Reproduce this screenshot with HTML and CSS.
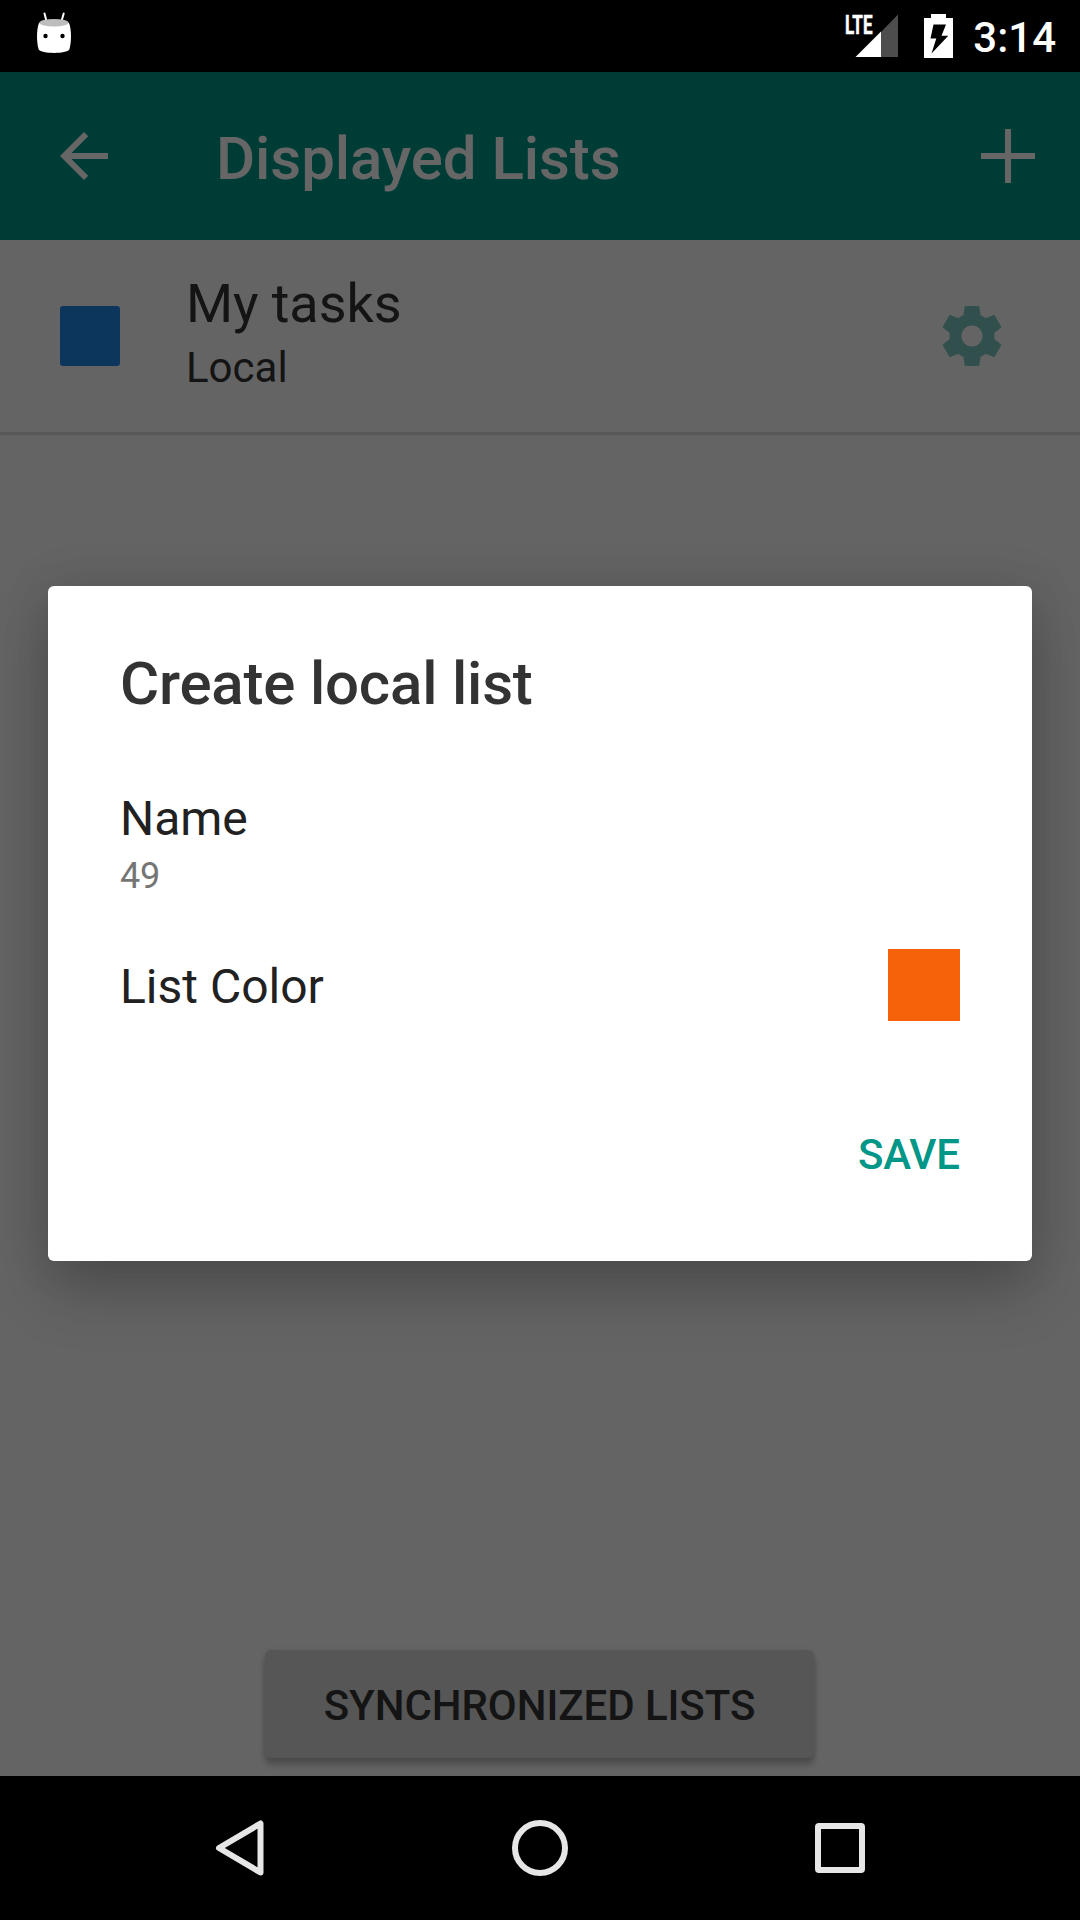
FILE: index.html
```html
<!DOCTYPE html>
<html lang="en">
<head>
<meta charset="utf-8">
<title>Displayed Lists</title>
<link rel="stylesheet" href="styles.css">
</head>
<body>
<div class="screen">
  <header class="status-bar">
    <svg class="status-robot" viewBox="0 0 40 48" aria-hidden="true">
      <path d="M10.5 3.5L12.7 12M29.7 3.5L27.3 12" stroke="#fff" stroke-width="2" stroke-linecap="round"/>
      <path d="M5 13C8 9.500 32 9.500 35 13C37.500 19 37.700 32 35.300 39.500C33 44 7 44 4.700 39.500C2.300 32 2.500 19 5 13Z" fill="#fff"/>
      <ellipse cx="20" cy="12.800" rx="14.500" ry="3.800" fill="#bdbdbd"/>
      <circle cx="11.500" cy="26" r="2.200"/><circle cx="28.500" cy="26" r="2.200"/>
    </svg>
    <svg class="status-signal" viewBox="0 0 56 48" aria-hidden="true">
      <path d="M38 22L55 4.500V47H38Z" fill="#4d4d4d"/>
      <path d="M12.500 47L38 21.500V47Z" fill="#fff"/>
      <text class="network" x="2" y="23.500" textLength="27.500" lengthAdjust="spacingAndGlyphs">LTE</text>
    </svg>
    <svg class="status-battery" viewBox="0 0 29 44" aria-hidden="true">
      <path fill="#fff" fill-rule="evenodd" d="M7 0H22V4H29V44H0V4H7ZM9.500 10.500L6.500 24.500H12.300L7.500 39.500L24.300 21.700H17.500L22 10.500Z"/>
    </svg>
    <span class="clock">3:14</span>
  </header>

  <main class="app">
    <div class="app-bar">
      <svg class="icon" viewBox="0 0 24 24" aria-label="Back"><path d="M20 11H7.830l5.590-5.590L12 4l-8 8 8 8 1.410-1.410L7.830 13H20v-2z"/></svg>
      <h1 class="app-title">Displayed Lists</h1>
      <svg class="icon" viewBox="0 0 24 24" aria-label="Add"><path d="M11 3h2v8h8v2h-8v8h-2v-8H3v-2h8z"/></svg>
    </div>
    <div class="list-row">
      <span class="list-swatch"></span>
      <div class="list-text">
        <div class="list-name">My tasks</div>
        <div class="list-account">Local</div>
      </div>
      <svg class="icon gear" viewBox="0 0 24 24" aria-label="Settings"><path d="M19.430 12.980c.04-.32.070-.64.070-.98s-.03-.66-.07-.98l2.110-1.650c.19-.15.240-.42.120-.64l-2-3.460c-.12-.22-.39-.3-.61-.22l-2.490 1c-.52-.4-1.080-.73-1.690-.98l-.38-2.650C14.460 2.180 14.250 2 14 2h-4c-.25 0-.46.180-.49.420l-.38 2.650c-.61.250-1.170.59-1.690.98l-2.490-1c-.23-.09-.49 0-.61.220l-2 3.460c-.13.220-.07.490.12.640l2.110 1.650c-.04.320-.07.650-.07.980s.03.660.070.980l-2.110 1.650c-.19.150-.24.420-.12.640l2 3.460c.12.220.39.300.61.220l2.490-1c.52.400 1.080.730 1.690.980l.38 2.650c.03.240.24.420.49.420h4c.25 0 .46-.18.490-.42l.38-2.650c.61-.25 1.170-.59 1.690-.98l2.490 1c.23.090.49 0 .61-.22l2-3.460c.12-.22.070-.49-.12-.64l-2.110-1.650zM12 15.500c-1.930 0-3.500-1.570-3.500-3.500s1.570-3.500 3.500-3.500 3.500 1.570 3.500 3.500-1.570 3.500-3.500 3.500z"/></svg>
    </div>
    <div class="app-footer">
      <button class="sync-button">SYNCHRONIZED LISTS</button>
    </div>

    <div class="scrim">
      <section class="dialog" role="dialog">
        <h2 class="dialog-title">Create local list</h2>
        <div class="field-name">Name</div>
        <div class="field-value">49</div>
        <div class="color-row">
          <span class="field-name">List Color</span>
          <span class="color-swatch"></span>
        </div>
        <button class="save">SAVE</button>
      </section>
    </div>
  </main>

  <nav class="nav-bar">
    <svg class="nav-icon" viewBox="0 0 72 72" aria-label="Back"><path d="M56.500 11.500V60.500L15 36Z"/></svg>
    <svg class="nav-icon" viewBox="0 0 72 72" aria-label="Home"><circle cx="36" cy="36" r="25"/></svg>
    <svg class="nav-icon" viewBox="0 0 72 72" aria-label="Recents"><rect x="14" y="14" width="44" height="44" rx="1"/></svg>
  </nav>
</div>
</body>
</html>
```
FILE: styles.css
```css
* {
  box-sizing: border-box;
  margin: 0;
}

body {
  font-family: Roboto, "Liberation Sans", sans-serif;
}

button {
  border: 0;
  padding: 0;
  font: inherit;
}

.screen {
  width: 1080px;
  height: 1920px;
  display: flex;
  flex-direction: column;
  overflow: hidden;
  background: #000;
}

/* Status bar */
.status-bar {
  height: 72px;
  display: flex;
  align-items: flex-start;
  padding: 10px 24px 0 34px;
}

.status-robot {
  width: 40px;
  height: 48px;
}

.status-signal {
  width: 56px;
  height: 48px;
  margin-left: auto;
}

.network {
  font: 700 26px Roboto, sans-serif;
  fill: #fff;
  stroke: #fff;
  stroke-width: 0.5px;
}

.status-battery {
  width: 29px;
  height: 44px;
  margin: 4px 20.5px 0 24.5px;
}

.clock {
  color: #fff;
  font-size: 42px;
  font-weight: 500;
  line-height: 56px;
}

/* App */
.app {
  position: relative;
  height: 1704px;
  display: flex;
  flex-direction: column;
  background: #fafafa;
}

.app-bar {
  height: 168px;
  display: flex;
  align-items: center;
  padding: 0 36px 0 48px;
  background: #009688;
}

.icon {
  width: 72px;
  height: 72px;
  fill: #fff;
}

.app-title {
  flex: 1;
  margin-left: 96px;
  padding-top: 6px;
  color: #fff;
  font-size: 60px;
  font-weight: 500;
  line-height: 70px;
  letter-spacing: -0.07px;
}

.list-row {
  height: 195px;
  display: flex;
  align-items: center;
  padding: 0 72px 0 60px;
  border-bottom: 3px solid #dcdcdc;
}

.list-swatch {
  width: 60px;
  height: 60px;
  border-radius: 3px;
  background: #1e88e5;
}

.list-text {
  flex: 1;
  margin-left: 66px;
  color: #333;
}

.list-name {
  font-size: 54px;
  line-height: 64px;
  letter-spacing: -0.1px;
}

.list-account {
  font-size: 42px;
  line-height: 64px;
}

.gear {
  fill: #009688;
  opacity: 0.5;
}

.app-footer {
  flex: 1;
  display: flex;
  justify-content: center;
  align-items: flex-end;
  padding: 0 1px 18px 0;
}

.sync-button {
  width: 549px;
  height: 108px;
  padding-top: 2px;
  border-radius: 6px;
  background: #d6d6d6;
  color: #333;
  font-size: 42px;
  font-weight: 500;
  letter-spacing: -0.07px;
  box-shadow: 0 7px 6px rgba(0, 0, 0, 0.22), 0 1px 6px rgba(0, 0, 0, 0.12);
}

/* Dialog */
.scrim {
  position: absolute;
  inset: 0;
  padding: 514px 48px 0;
  background: rgba(0, 0, 0, 0.6);
}

.dialog {
  height: 675px;
  display: flex;
  flex-direction: column;
  padding: 63px 72px 0;
  border-radius: 6px;
  background: #fff;
  box-shadow: 0 30px 60px rgba(0, 0, 0, 0.22), 0 0 50px rgba(0, 0, 0, 0.1);
}

.dialog-title {
  color: #333;
  font-size: 60px;
  font-weight: 500;
  line-height: 70px;
  letter-spacing: -0.2px;
}

.field-name {
  color: #212121;
  font-size: 48px;
  line-height: 56px;
  letter-spacing: -0.1px;
}

.dialog-title + .field-name {
  margin-top: 72px;
}

.field-value {
  margin-top: 8px;
  color: #757575;
  font-size: 36px;
  line-height: 42px;
  letter-spacing: -0.3px;
}

.color-row {
  display: flex;
  justify-content: space-between;
  align-items: center;
  margin-top: 52px;
}

.color-row .field-name {
  padding-top: 3px;
  letter-spacing: 0;
}

.color-swatch {
  width: 72px;
  height: 72px;
  background: #f66209;
}

.save {
  align-self: flex-end;
  margin-top: 109px;
  background: none;
  color: #009688;
  font-size: 42px;
  font-weight: 500;
  line-height: 50px;
  letter-spacing: -0.1px;
}

/* Navigation bar */
.nav-bar {
  height: 144px;
  display: flex;
  justify-content: center;
  align-items: center;
  gap: 228px;
}

.nav-icon {
  width: 72px;
  height: 72px;
  fill: none;
  stroke: #e6e6e6;
  stroke-width: 6;
  stroke-linejoin: round;
}
```
